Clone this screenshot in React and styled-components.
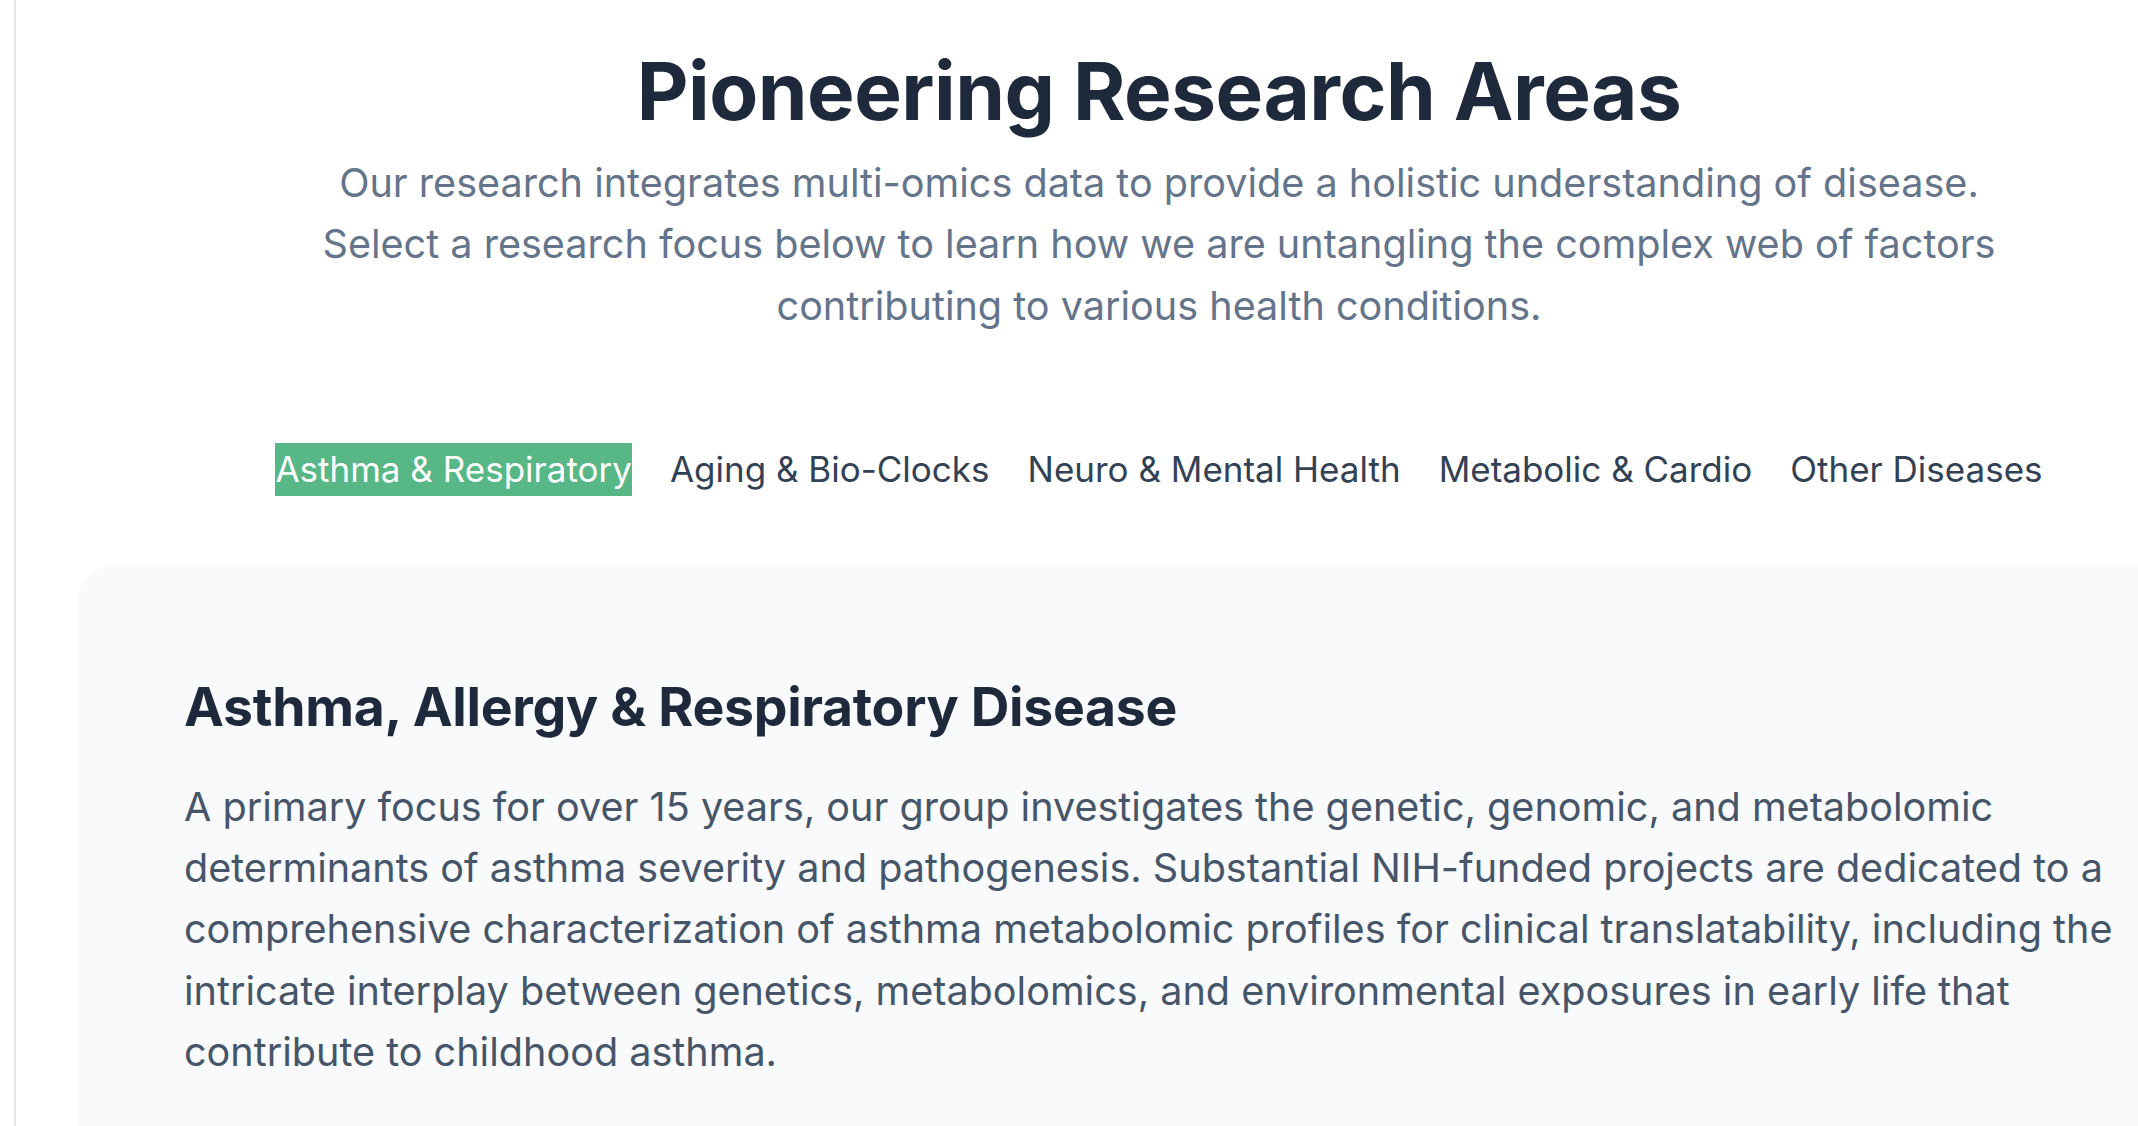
import React, { useState } from "react";
import styled, { createGlobalStyle } from "styled-components";

const Global = createGlobalStyle`
  html, body {
    margin: 0;
    padding: 0;
    background: #ffffff;
    overflow: hidden;
  }
  body {
    font-family: Inter, "Noto Sans", "Liberation Sans", sans-serif;
    -webkit-font-smoothing: antialiased;
  }
  * { box-sizing: border-box; }
`;

const Page = styled.div`
  display: flex;
  min-height: 100vh;
  width: 2300px;
`;

const Rule = styled.div`
  flex: 0 0 2px;
  margin-left: 14px;
  background: #e5e5e5;
`;

const Main = styled.main`
  flex: 0 0 2264px;
  padding: 46px 62px 0;
  display: flex;
  flex-direction: column;
  align-items: center;
`;

const Title = styled.h1`
  margin: 0;
  font-size: 80px;
  line-height: 90px;
  font-weight: 700;
  letter-spacing: -0.5px;
  color: #1e293b;
  text-align: center;
`;

const Lead = styled.p`
  margin: 17px 0 0;
  max-width: 1740px;
  font-size: 39.6px;
  line-height: 61.3px;
  color: #64748b;
  text-align: center;
`;

const Tabs = styled.nav`
  display: flex;
  justify-content: center;
  gap: 38px;
  margin-top: 106px;
`;

const Tab = styled.button`
  border: 0;
  padding: 0;
  margin: 0;
  font-family: inherit;
  font-size: 35px;
  line-height: 53px;
  cursor: pointer;
  background: ${(p) => (p.$active ? "#57b786" : "transparent")};
  color: ${(p) => (p.$active ? "#ffffff" : "#334155")};
`;

const Card = styled.section`
  align-self: stretch;
  margin-top: 70px;
  background: #f8fafc;
  border-radius: 34px;
  padding: 105px 106px 120px;
  display: grid;
  grid-template-columns: 1944px 1fr;
  column-gap: 6px;
`;

const TextCol = styled.div`
  display: flex;
  flex-direction: column;
  gap: 34px;
`;

const CardTitle = styled.h2`
  margin: 0;
  font-size: 53.5px;
  line-height: 72px;
  font-weight: 700;
  letter-spacing: -0.3px;
  color: #1e293b;
`;

const Body = styled.p`
  margin: 0;
  font-size: 39.6px;
  line-height: 61.3px;
  color: #475569;
`;

const Visual = styled.div`
  margin-top: 334px;
  height: 520px;
  background: #ffffff;
  border-radius: 24px;
  box-shadow: 0 10px 30px rgba(15, 23, 42, 0.08);
`;

const tabs = [
  "Asthma & Respiratory",
  "Aging & Bio-Clocks",
  "Neuro & Mental Health",
  "Metabolic & Cardio",
  "Other Diseases",
];

export default function App() {
  const [active, setActive] = useState(0);
  return (
    <>
      <Global />
      <Page>
        <Rule />
        <Main>
          <Title>Pioneering Research Areas</Title>
          <Lead>
            Our research integrates multi-omics data to provide a holistic understanding of disease.
            Select a research focus below to learn how we are untangling the complex web of factors
            contributing to various health conditions.
          </Lead>
          <Tabs>
            {tabs.map((t, i) => (
              <Tab key={t} $active={i === active} onClick={() => setActive(i)}>
                {t}
              </Tab>
            ))}
          </Tabs>
          <Card>
            <TextCol>
              <CardTitle>Asthma, Allergy &amp; Respiratory Disease</CardTitle>
              <Body>
                A primary focus for over 15 years, our group investigates the genetic, genomic, and
                metabolomic determinants of asthma severity and pathogenesis. Substantial NIH-funded
                projects are dedicated to a comprehensive characterization of asthma metabolomic
                profiles for clinical translatability, including the intricate interplay between
                genetics, metabolomics, and environmental exposures in early life that contribute to
                childhood asthma.
              </Body>
            </TextCol>
            <Visual />
          </Card>
        </Main>
      </Page>
    </>
  );
}
